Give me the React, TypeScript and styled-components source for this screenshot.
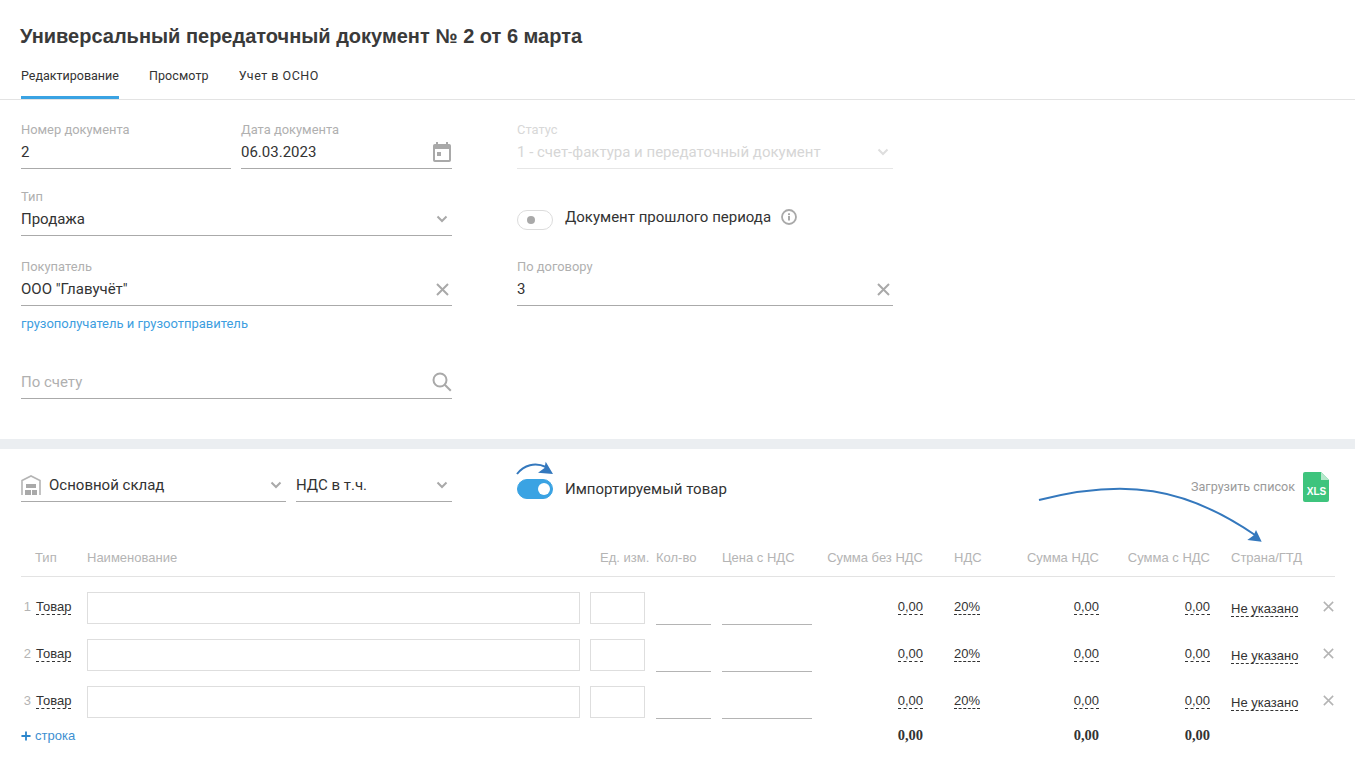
import React from 'react';
import styled, { createGlobalStyle } from 'styled-components';

const Global = createGlobalStyle`
  html, body { margin: 0; padding: 0; background: #fff; }
  body { font-family: Roboto, "Liberation Sans", sans-serif; color: #333; }
`;

const Page = styled.div`
  width: 1355px;
  height: 770px;
  overflow: hidden;
  position: relative;
`;
const Header = styled.header`
  height: 99px;
  padding: 0 20px;
  border-bottom: 1px solid #e3e3e3;
  box-sizing: content-box;
`;
const Title = styled.h1`
  margin: 0;
  padding-top: 24px;
  font: bold 20px/24px "Liberation Sans", sans-serif;
  color: #3a3a3a;
`;
const Tabs = styled.nav`
  display: flex;
  gap: 30px;
  margin-top: 16px;
  padding-left: 1px;
`;
const Tab = styled.div<{ $active?: boolean; $ls?: number }>`
  height: 35px;
  box-sizing: border-box;
  font-size: 12.5px;
  line-height: 15px;
  letter-spacing: ${p => p.$ls ?? 0}px;
  padding-top: 4px;
  color: #333;
  border-bottom: 3px solid ${p => (p.$active ? '#3aa3e3' : 'transparent')};
`;
const FormSection = styled.section`
  height: 349px;
  box-sizing: border-box;
  padding: 22px 0 0 21px;
  display: flex;
  gap: 65px;
  border-bottom: 10px solid #ebeef1;
`;
const Col = styled.div<{ $w: number }>`
  width: ${p => p.$w}px;
  display: flex;
  flex-direction: column;
`;
const Row = styled.div`
  display: grid;
  grid-template-columns: 210px 211px;
  gap: 10px;
`;
const Field = styled.div<{ $h?: number; $mb?: number; $disabled?: boolean }>`
  flex: none;
  min-width: 0;
  height: ${p => p.$h ?? 47}px;
  box-sizing: border-box;
  border-bottom: 1px solid ${p => (p.$disabled ? '#e6e6e6' : '#aaa')};
  margin-bottom: ${p => p.$mb ?? 20}px;
  position: relative;
  display: flex;
  flex-direction: column;
`;
const Label = styled.div<{ $disabled?: boolean }>`
  font-size: 12.9px;
  line-height: 14px;
  color: ${p => (p.$disabled ? '#d8d8d8' : '#b0b0b0')};
  margin-top: 1px;
`;
const Value = styled.div<{ $disabled?: boolean; $placeholder?: boolean; $mt?: number }>`
  display: flex;
  align-items: center;
  justify-content: space-between;
  font-size: 15px;
  line-height: 24px;
  height: 24px;
  margin-top: ${p => p.$mt ?? 3}px;
  color: ${p => (p.$disabled ? '#d6d6d6' : p.$placeholder ? '#b0b0b0' : '#333')};
`;
const IconSlot = styled.span<{ $faded?: boolean }>`
  display: flex;
  width: 20px;
  height: 20px;
  align-items: center;
  justify-content: center;
  flex: none;
  color: ${p => (p.$faded ? '#dedede' : '#a9a9a9')};
`;
const LinkText = styled.a`
  display: block;
  font-size: 13px;
  line-height: 14px;
  color: #3d9ee0;
  margin-bottom: 35px;
`;
const ToggleRow = styled.div<{ $mb?: number }>`
  display: flex;
  align-items: center;
  height: 22px;
  gap: 12px;
  margin-bottom: ${p => p.$mb ?? 0}px;
  font-size: 15px;
  color: #333;
`;
const Toggle = styled.span<{ $on?: boolean; $shift?: number }>`
  width: 36px;
  height: 20px;
  box-sizing: border-box;
  border-radius: 10px;
  border: 1px solid ${p => (p.$on ? '#3aa3e3' : '#dcdcdc')};
  background: ${p => (p.$on ? '#3aa3e3' : '#fff')};
  position: relative;
  flex: none;
  margin-top: ${p => p.$shift ?? 0}px;
  &::after {
    content: '';
    position: absolute;
    top: ${p => (p.$on ? 3 : 5)}px;
    left: ${p => (p.$on ? 20 : 9)}px;
    width: ${p => (p.$on ? 12 : 8)}px;
    height: ${p => (p.$on ? 12 : 8)}px;
    border-radius: 50%;
    background: ${p => (p.$on ? '#fff' : '#a9a9a9')};
  }
`;
const InfoSlot = styled.span`
  display: flex;
  margin-left: -2px;
`;
const Goods = styled.section`
  padding: 0 20px 0 21px;
  position: relative;
`;
const Toolbar = styled.div`
  display: flex;
  align-items: flex-start;
  height: 92px;
  padding-top: 20px;
  box-sizing: border-box;
`;
const ToolLeft = styled.div`
  width: 431px;
  display: flex;
  gap: 10px;
  margin-right: 65px;
`;
const ToolField = styled.div<{ $w: number }>`
  width: ${p => p.$w}px;
  height: 33px;
  box-sizing: border-box;
  border-bottom: 1px solid #aaa;
  display: flex;
  align-items: center;
  justify-content: space-between;
  font-size: 15px;
  color: #333;
  padding-bottom: 1px;
`;
const ToolName = styled.span`
  display: flex;
  align-items: center;
  gap: 8px;
`;
const ImportWrap = styled.div`
  padding-top: 9px;
`;
const Upload = styled.div`
  margin-left: auto;
  display: flex;
  align-items: center;
  gap: 8px;
  font-size: 12.6px;
  color: #9a9a9a;
  margin-top: 3px;
  margin-right: 6px;
`;
const UploadText = styled.span`
  padding-bottom: 2px;
`;
const cols = '66px 503px 66px 66px 90px 111px 66px 110px 111px 108px 17px';
const TableHead = styled.div`
  display: grid;
  grid-template-columns: ${cols};
  height: 36px;
  box-sizing: border-box;
  border-bottom: 1px solid #e3e3e3;
  font: 13px/16px "Liberation Sans", sans-serif;
  color: #b4b4b4;
  padding-top: 9px;
`;
const HeadCell = styled.div<{ $right?: boolean; $pl?: number }>`
  text-align: ${p => (p.$right ? 'right' : 'left')};
  padding-left: ${p => p.$pl ?? 0}px;
  white-space: nowrap;
`;
const TableBody = styled.div`
  padding-top: 15px;
`;
const TRow = styled.div`
  display: grid;
  grid-template-columns: ${cols};
  height: 47px;
  font: 13px/16px "Liberation Sans", sans-serif;
  color: #333;
`;
const Cell = styled.div<{ $right?: boolean; $pl?: number; $pr?: number }>`
  display: flex;
  align-items: flex-start;
  justify-content: ${p => (p.$right ? 'flex-end' : 'flex-start')};
  padding-left: ${p => p.$pl ?? 0}px;
  padding-right: ${p => p.$pr ?? 0}px;
  padding-top: 7px;
  white-space: nowrap;
`;
const InputCell = styled.div<{ $pr?: number }>`
  padding-right: ${p => p.$pr ?? 0}px;
`;
const BoxInput = styled.div`
  height: 32px;
  box-sizing: border-box;
  border: 1px solid #dedede;
  background: #fff;
`;
const LineInput = styled.div`
  height: 33px;
  box-sizing: border-box;
  border-bottom: 1px solid #b4b4b4;
`;
const Num = styled.span`
  color: #b4b4b4;
  width: 15px;
  text-align: right;
  padding-right: 5px;
  margin-left: -5px;
  box-sizing: content-box;
`;
const Dashed = styled.span`
  border-bottom: 1px dashed #333;
  line-height: 15px;
  display: inline-block;
`;
const Country = styled(Dashed)`
  margin-top: 2px;
`;
const Remove = styled.span`
  color: #b4b4b4;
  display: flex;
  margin-top: 2px;
  margin-left: 5px;
`;
const TotalRow = styled.div`
  display: grid;
  grid-template-columns: ${cols};
  margin-top: -5px;
  font: 13px/16px "Liberation Sans", sans-serif;
  color: #333;
`;
const AddRow = styled.div`
  display: flex;
  align-items: center;
  gap: 4px;
  color: #3d8fd1;
  font-size: 13px;
  line-height: 16px;
  white-space: nowrap;
`;
const Total = styled.div`
  font: bold 14.5px/16px "Liberation Serif", serif;
  text-align: right;
  margin-top: -1px;
`;
const Arrow = styled.svg`
  position: absolute;
  left: 0;
  top: 0;
  pointer-events: none;
`;

const Chevron = () => (
  <svg width="12" height="8" viewBox="0 0 12 8" fill="none"><path d="M1.5 1.5 6 6l4.5-4.5" stroke="currentColor" strokeWidth="2" /></svg>
);
const Cross = ({ s = 13, w = 2 }: { s?: number; w?: number }) => (
  <svg width={s} height={s} viewBox="0 0 13 13" fill="none"><path d="M1 1l11 11M12 1 1 12" stroke="currentColor" strokeWidth={w} /></svg>
);
const Calendar = () => (
  <svg width="18" height="20" viewBox="0 0 18 20" fill="currentColor">
    <path fillRule="evenodd" d="M3 0h2v2h8V0h2v2h1.2A1.8 1.8 0 0 1 18 3.8v14.4a1.8 1.8 0 0 1-1.8 1.8H1.8A1.8 1.8 0 0 1 0 18.200V3.800A1.800 1.800 0 0 1 1.800 2H3V0zM2 7v11h14V7H2z" />
    <rect x="4" y="10" width="4" height="4" />
  </svg>
);
const Search = () => (
  <svg width="20" height="20" viewBox="0 0 20 20" fill="none" stroke="currentColor" strokeWidth="2"><circle cx="8" cy="8" r="6.500" /><path d="m12.800 12.800 6 6" /></svg>
);
const Info = () => (
  <svg width="16" height="16" viewBox="0 0 16 16" fill="none"><circle cx="8" cy="8" r="7" stroke="#a9a9a9" strokeWidth="1.800" /><rect x="7" y="7" width="2" height="4.500" fill="#a9a9a9" /><rect x="7" y="4.300" width="2" height="1.800" fill="#a9a9a9" /></svg>
);
const Warehouse = () => (
  <svg width="20" height="20" viewBox="0 0 20 20"><path d="M1 20V5.500L10 1l9 4.500V20" fill="none" stroke="#b4b4b4" strokeWidth="1.600" /><rect x="5" y="9" width="10" height="4" fill="#a9a9a9" /><rect x="4" y="15" width="6" height="5" fill="#a9a9a9" /><rect x="11" y="15" width="5" height="5" fill="#a9a9a9" /></svg>
);
const XlsIcon = () => (
  <svg width="26" height="30" viewBox="0 0 26 30">
    <path d="M2 0h16l8 8v20a2 2 0 0 1-2 2H2a2 2 0 0 1-2-2V2a2 2 0 0 1 2-2z" fill="#3ec47d" />
    <path d="M18 0l8 8h-8z" fill="#b5e8cb" />
    <text x="13.500" y="22.500" textAnchor="middle" fontFamily="Liberation Sans, sans-serif" fontWeight="bold" fontSize="10" fill="#fff">XLS</text>
  </svg>
);

const rows = [1, 2, 3];

export default function App() {
  return (
    <Page>
      <Global />
      <Header>
        <Title>Универсальный передаточный документ № 2 от 6 марта</Title>
        <Tabs>
          <Tab $active>Редактирование</Tab>
          <Tab $ls={0.1}>Просмотр</Tab>
          <Tab $ls={0.5}>Учет в ОСНО</Tab>
        </Tabs>
      </Header>
      <FormSection>
        <Col $w={431}>
          <Row>
            <Field>
              <Label>Номер документа</Label>
              <Value>2</Value>
            </Field>
            <Field>
              <Label>Дата документа</Label>
              <Value>06.03.2023<IconSlot><Calendar /></IconSlot></Value>
            </Field>
          </Row>
          <Field $mb={23}>
            <Label>Тип</Label>
            <Value>Продажа<IconSlot><Chevron /></IconSlot></Value>
          </Field>
          <Field $mb={11}>
            <Label>Покупатель</Label>
            <Value>ООО "Главучёт"<IconSlot><Cross /></IconSlot></Value>
          </Field>
          <LinkText>грузополучатель и грузоотправитель</LinkText>
          <Field $h={33}>
            <Value $placeholder $mt={4}>По счету<IconSlot><Search /></IconSlot></Value>
          </Field>
        </Col>
        <Col $w={376}>
          <Field $disabled $mb={37}>
            <Label $disabled>Статус</Label>
            <Value $disabled>1 - счет-фактура и передаточный документ<IconSlot $faded><Chevron /></IconSlot></Value>
          </Field>
          <ToggleRow $mb={31}>
            <Toggle $shift={6} />
            <span>Документ прошлого периода</span>
            <InfoSlot><Info /></InfoSlot>
          </ToggleRow>
          <Field>
            <Label>По договору</Label>
            <Value>3<IconSlot><Cross /></IconSlot></Value>
          </Field>
        </Col>
      </FormSection>
      <Goods>
        <Toolbar>
          <ToolLeft>
            <ToolField $w={265}>
              <ToolName><Warehouse />Основной склад</ToolName>
              <IconSlot><Chevron /></IconSlot>
            </ToolField>
            <ToolField $w={156}>
              НДС в т.ч.
              <IconSlot><Chevron /></IconSlot>
            </ToolField>
          </ToolLeft>
          <ImportWrap>
            <ToggleRow>
              <Toggle $on />
              <span>Импортируемый товар</span>
            </ToggleRow>
          </ImportWrap>
          <Upload><UploadText>Загрузить список</UploadText><XlsIcon /></Upload>
        </Toolbar>
        <TableHead>
          <HeadCell $pl={14}>Тип</HeadCell>
          <HeadCell>Наименование</HeadCell>
          <HeadCell $pl={10}>Ед. изм.</HeadCell>
          <HeadCell>Кол-во</HeadCell>
          <HeadCell>Цена с НДС</HeadCell>
          <HeadCell $right>Сумма без НДС</HeadCell>
          <HeadCell $pl={31}>НДС</HeadCell>
          <HeadCell $right>Сумма НДС</HeadCell>
          <HeadCell $right>Сумма с НДС</HeadCell>
          <HeadCell $pl={21}>Страна/ГТД</HeadCell>
          <HeadCell />
        </TableHead>
        <TableBody>
          {rows.map(n => (
            <TRow key={n}>
              <Cell><Num>{n}</Num><Dashed>Товар</Dashed></Cell>
              <InputCell $pr={10}><BoxInput /></InputCell>
              <InputCell $pr={11}><BoxInput /></InputCell>
              <InputCell $pr={11}><LineInput /></InputCell>
              <InputCell><LineInput /></InputCell>
              <Cell $right><Dashed>0,00</Dashed></Cell>
              <Cell $pl={31}><Dashed>20%</Dashed></Cell>
              <Cell $right><Dashed>0,00</Dashed></Cell>
              <Cell $right><Dashed>0,00</Dashed></Cell>
              <Cell $pl={21}><Country>Не указано</Country></Cell>
              <Cell><Remove><Cross s={11} w={1.8} /></Remove></Cell>
            </TRow>
          ))}
          <TotalRow>
            <AddRow>
              <svg width="10" height="10" viewBox="0 0 11 11"><path d="M5.500 0.500v10M0.500 5.500h10" stroke="#2b86cc" strokeWidth="2" /></svg>
              строка
            </AddRow>
            <div /><div /><div /><div />
            <Total>0,00</Total>
            <div />
            <Total>0,00</Total>
            <Total>0,00</Total>
          </TotalRow>
        </TableBody>
      </Goods>
      <Arrow width="1355" height="770" viewBox="0 0 1355 770" fill="none">
        <path d="M517 474C524 465 535 462 546 467" stroke="#3478bd" strokeWidth="2" />
        <path d="M545.700 461.700 553 474 538 472.700 544.500 468z" fill="#3478bd" />
        <path d="M1039 500C1125 478 1185 487 1255 535" stroke="#3478bd" strokeWidth="2" />
        <path d="M1256 530 1261.700 541.700 1247.300 540 1253.500 535.500z" fill="#3478bd" />
      </Arrow>
    </Page>
  );
}
